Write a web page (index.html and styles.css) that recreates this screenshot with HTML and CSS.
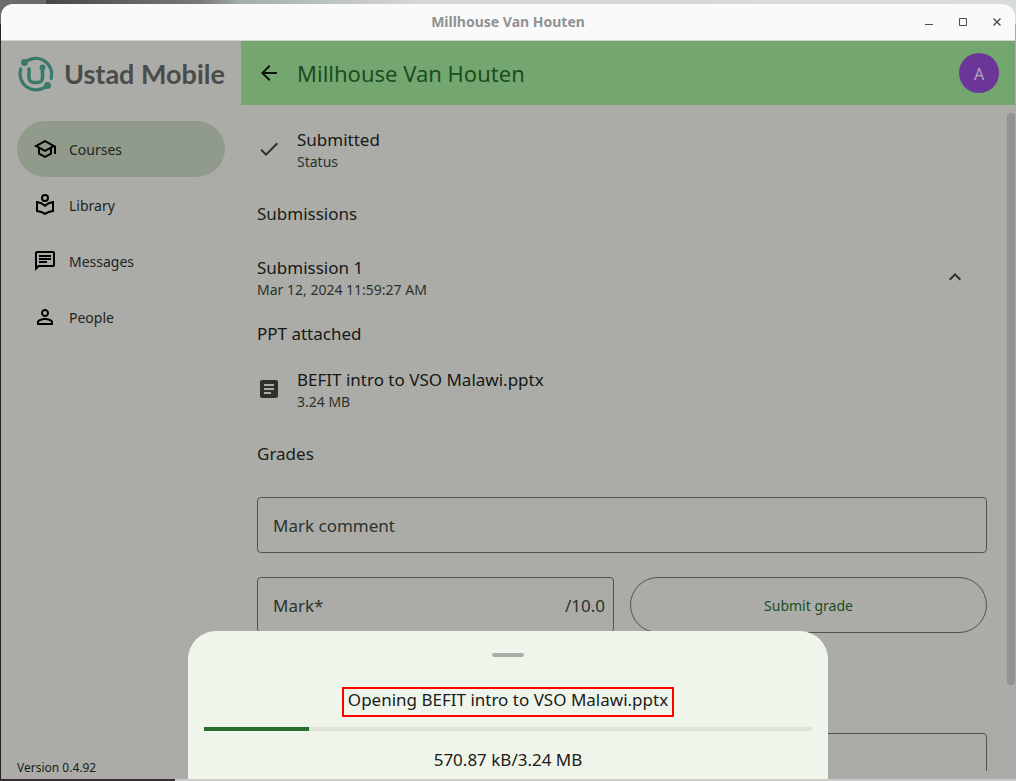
FILE: index.html
```html
<!DOCTYPE html>
<html lang="en">
<head>
<meta charset="utf-8">
<meta name="viewport" content="width=device-width, initial-scale=1">
<title>Millhouse Van Houten</title>
<link rel="stylesheet" href="styles.css">
</head>
<body class="desktop">
<div class="window">
  <header class="titlebar">
    <span class="titlebar-side"></span>
    <span class="titlebar-text">Millhouse Van Houten</span>
    <div class="titlebar-side window-buttons">
      <button class="window-button" aria-label="Minimize"><svg width="10" height="10" viewBox="0 0 10 10"><path d="M1 7.500h8"/></svg></button>
      <button class="window-button" aria-label="Maximize"><svg width="10" height="10" viewBox="0 0 10 10"><path d="M1.500 1.500h7v7h-7z"/></svg></button>
      <button class="window-button" aria-label="Close"><svg width="10" height="10" viewBox="0 0 10 10"><path d="M1.500 1.500l7 7M8.500 1.500l-7 7" stroke-width="1.400"/></svg></button>
    </div>
  </header>

  <div class="app">
    <aside class="sidebar">
      <div class="brand">
        <svg class="brand-mark" width="36" height="36" viewBox="0 0 36 36" aria-hidden="true">
          <g fill="none" stroke="#38796c" stroke-width="3.200" stroke-linecap="round">
            <path d="M7.500 6A16 16 0 0 1 33.200 22.500"/>
            <path d="M2.800 13A16 16 0 0 0 28.500 30"/>
            <path d="M11 13v8.500a5 5 0 0 0 5 5h3.500a5 5 0 0 0 5-5V12" stroke-width="3.600"/>
          </g>
          <g fill="#38796c"><circle cx="6.500" cy="6.500" r="3.400"/><circle cx="29.500" cy="29.500" r="3.400"/><circle cx="24.500" cy="11.500" r="3"/></g>
        </svg>
        <span class="brand-name">Ustad Mobile</span>
      </div>
      <nav class="nav">
        <a class="nav-item nav-item-active" href="#courses"><svg class="icon" viewBox="0 0 24 24"><path d="M12 3L1 9l4 2.180v6L12 21l7-3.820v-6l2-1.090V17h2V9L12 3zm6.820 6L12 12.720 5.180 9 12 5.280 18.820 9zM17 15.990l-5 2.730-5-2.730v-3.720L12 15l5-2.730v3.720z"/></svg><span class="nav-label">Courses</span></a>
        <a class="nav-item" href="#library"><svg class="icon" viewBox="0 0 24 24"><g fill="none" stroke="currentColor" stroke-width="2"><circle cx="12" cy="5" r="3"/><path d="M4 9.100c3 .4 5.800 1.600 8 3.600 2.200-2 5-3.200 8-3.600v8.900c-3 .3-5.800 1.200-8 2.900-2.200-1.700-5-2.600-8-2.900z"/></g></svg><span class="nav-label">Library</span></a>
        <a class="nav-item" href="#messages"><svg class="icon" viewBox="0 0 24 24"><path d="M4 4h16v12H5.170L4 17.170V4m0-2c-1.100 0-1.990.9-1.990 2L2 22l4-4h14c1.100 0 2-.9 2-2V4c0-1.100-.9-2-2-2H4zm2 10h8v2H6v-2zm0-3h12v2H6V9zm0-3h12v2H6V6z"/></svg><span class="nav-label">Messages</span></a>
        <a class="nav-item" href="#people"><svg class="icon" viewBox="0 0 24 24"><path d="M12 5.900a2.100 2.100 0 1 1 0 4.200 2.100 2.100 0 0 1 0-4.200m0 9c2.970 0 6.100 1.460 6.100 2.100v1.100H5.900V17c0-.64 3.130-2.100 6.100-2.100M12 4C9.790 4 8 5.790 8 8s1.790 4 4 4 4-1.790 4-4-1.790-4-4-4zm0 9c-2.670 0-8 1.340-8 4v3h16v-3c0-2.660-5.330-4-8-4z"/></svg><span class="nav-label">People</span></a>
      </nav>
      <p class="version">Version 0.4.92</p>
    </aside>

    <div class="page">
      <div class="appbar">
        <button class="icon-button back" aria-label="Back"><svg class="icon" viewBox="0 0 24 24"><path d="M20 11H7.830l5.590-5.590L12 4l-8 8 8 8 1.410-1.410L7.830 13H20v-2z"/></svg></button>
        <h1 class="appbar-title">Millhouse Van Houten</h1>
        <button class="avatar">A</button>
      </div>

      <main class="content">
        <div class="content-body">
          <div class="row">
            <svg class="icon" viewBox="0 0 24 24"><path d="M9 16.170L4.830 12l-1.420 1.410L9 19 21 7l-1.410-1.410z"/></svg>
            <div class="row-text"><div class="primary">Submitted</div><div class="secondary">Status</div></div>
          </div>
          <h2 class="section">Submissions</h2>
          <div class="row row-expand">
            <div class="row-text"><div class="primary">Submission 1</div><div class="secondary">Mar 12, 2024 11:59:27 AM</div></div>
            <button class="icon-button expand" aria-label="Collapse"><svg class="icon" viewBox="0 0 24 24"><path d="M12 8l-6 6 1.410 1.410L12 10.830l4.590 4.580L18 14z"/></svg></button>
          </div>
          <p class="primary note">PPT attached</p>
          <div class="row">
            <svg class="icon" viewBox="0 0 24 24"><path d="M19 3H5c-1.100 0-2 .9-2 2v14c0 1.100.9 2 2 2h14c1.100 0 2-.9 2-2V5c0-1.100-.9-2-2-2zm-5 14H7v-2h7v2zm3-4H7v-2h10v2zm0-4H7V7h10v2z"/></svg>
            <div class="row-text"><div class="primary">BEFIT intro to VSO Malawi.pptx</div><div class="secondary">3.24 MB</div></div>
          </div>
          <h2 class="section">Grades</h2>
          <form class="grade-form">
            <div class="field"><input class="field-input" type="text" aria-label="Mark comment" placeholder="Mark comment"></div>
            <div class="grade-row">
              <div class="field"><input class="field-input" type="text" aria-label="Mark" placeholder="Mark*"><span class="field-suffix">/10.0</span></div>
              <button class="submit" type="button">Submit grade</button>
            </div>
          </form>
          <div class="field comment-field"><input class="field-input" type="text" aria-label="Comment"></div>
        </div>
        <div class="scrollbar"></div>
      </main>
    </div>
  </div>

  <section class="sheet" aria-label="Opening file">
    <div class="sheet-handle"></div>
    <label class="sheet-title" for="download">Opening BEFIT intro to VSO Malawi.pptx</label>
    <progress class="sheet-progress" id="download" value="570.87" max="3320"></progress>
    <p class="sheet-size">570.87 kB/3.24 MB</p>
  </section>
</div>
</body>
</html>
```

FILE: styles.css
```css
* {
  box-sizing: border-box;
}

body, h1, h2, p {
  margin: 0;
}

button, input {
  font: inherit;
  color: inherit;
  background: none;
  border: 0;
  padding: 0;
}

.desktop {
  height: 100vh;
  display: flex;
  flex-direction: column;
  padding: 4px 1px 2px;
  overflow: hidden;
  background:
    linear-gradient(90deg, #6c6b6b 46px, #46484c 46px, #77797b 200px, #a5acac 240px, #d5d8d8 420px, #d9dcdc) top / 100% 24px no-repeat,
    linear-gradient(90deg, #352f31 175px, #cbcacb 175px) bottom / 100% 2px no-repeat,
    linear-gradient(90deg, #2b1f25 50%, #a9aaa9 50%);
  font-family: "Noto Sans", sans-serif;
  color: #1a1c19;
}

.window {
  position: relative;
  flex: 1;
  min-height: 0;
  display: flex;
  flex-direction: column;
  overflow: hidden;
  border-radius: 12px 12px 0 0;
  background: #abaca7;
}

.titlebar {
  display: flex;
  align-items: center;
  height: 37px;
  flex: none;
  background: #fafafa;
  border-bottom: 1px solid #d2d2d2;
}

.titlebar-side {
  flex: 1;
  padding: 0 6px;
}

.titlebar-text {
  font-size: 14px;
  font-weight: 700;
  line-height: 20px;
  color: #929292;
}

.window-buttons {
  display: flex;
  justify-content: flex-end;
  gap: 10px;
}

.window-button {
  width: 24px;
  height: 24px;
  display: grid;
  place-items: center;
}

.window-button svg {
  fill: none;
  stroke: #4b4b4b;
}

.app {
  flex: 1;
  min-height: 0;
  display: flex;
}

.sidebar {
  width: 240px;
  flex: none;
  display: flex;
  flex-direction: column;
}

.brand {
  height: 64px;
  display: flex;
  align-items: center;
  gap: 10px;
  padding: 2px 16px 0 17px;
}

.brand-mark {
  flex: none;
  overflow: visible;
}

.brand-name {
  font-family: Lato, sans-serif;
  font-size: 27px;
  font-weight: 700;
  line-height: 32px;
  color: #4a4b4b;
  white-space: nowrap;
}

.nav {
  padding: 16px;
}

.nav-item {
  display: flex;
  align-items: center;
  gap: 12px;
  height: 56px;
  padding: 0 16px;
  border-radius: 28px;
  font-size: 14px;
  line-height: 20px;
  color: #20241f;
  text-decoration: none;
}

.nav-label {
  padding-top: 2px;
}

.nav-item .icon {
  color: #000;
}

.nav-item-active {
  background: #909b8b;
}

.icon {
  width: 24px;
  height: 24px;
  flex: none;
  fill: currentColor;
}

.version {
  margin-top: auto;
  padding: 0 16px 3px;
  font-size: 12px;
  line-height: 16px;
}

.page {
  flex: 1;
  min-width: 0;
  display: flex;
  flex-direction: column;
}

.appbar {
  height: 64px;
  flex: none;
  display: flex;
  align-items: center;
  padding: 0 16px 0 4px;
  background: #74a76f;
}

.icon-button {
  width: 48px;
  height: 48px;
  display: grid;
  place-items: center;
}

.back {
  color: #0b120b;
}

.appbar-title {
  flex: 1;
  padding-left: 4px;
  font-size: 22px;
  font-weight: 400;
  line-height: 28px;
  color: #1b4d1e;
}

.avatar {
  width: 40px;
  height: 40px;
  padding-top: 2px;
  border-radius: 50%;
  background: #6c3699;
  color: #b3a6bb;
  font-size: 16px;
  line-height: 24px;
}

.content {
  flex: 1;
  min-height: 0;
  display: flex;
  gap: 20px;
  padding: 8px 0 8px 16px;
}

.content-body {
  flex: 1;
  min-width: 0;
  overflow: hidden;
}

.scrollbar {
  width: 8px;
  height: 87%;
  border-radius: 4px;
  background: #93948f;
}

.row {
  display: flex;
  align-items: center;
  gap: 16px;
  height: 72px;
  color: #2c322b;
}

.row-text {
  flex: 1;
  padding-top: 2px;
}

.row-expand {
  padding-right: 8px;
}

.primary {
  font-size: 17px;
  line-height: 24px;
  color: #151815;
}

.secondary {
  font-size: 14px;
  line-height: 20px;
}

.section {
  padding: 17px 0 15px;
  font-size: 17px;
  font-weight: 400;
  line-height: 24px;
}

.note {
  padding: 9px 0 7px;
}

.grade-form {
  display: flex;
  flex-direction: column;
  gap: 24px;
  padding: 16px 0 100px;
}

.grade-row {
  display: grid;
  grid-template-columns: 1fr 1fr;
  gap: 16px;
}

.field {
  display: flex;
  align-items: center;
  height: 56px;
  padding: 2px 8px 0 15px;
  border: 1px solid #50534e;
  border-radius: 4px;
  font-size: 17px;
  line-height: 24px;
  color: #2c322b;
}

.field-input {
  flex: 1;
  min-width: 0;
  height: 24px;
  outline: 0;
}

.field-input::placeholder {
  color: inherit;
  opacity: 1;
}

.submit {
  height: 56px;
  padding-top: 2px;
  border: 1px solid #50534e;
  border-radius: 28px;
  font-size: 14px;
  line-height: 20px;
  color: #1b4d1e;
}

.sheet {
  position: absolute;
  left: 0;
  right: 0;
  bottom: 0;
  max-width: 640px;
  margin: 0 auto;
  padding: 22px 16px 7px;
  display: flex;
  flex-direction: column;
  align-items: center;
  border-radius: 28px 28px 0 0;
  background: #eff5eb;
}

.sheet-handle {
  width: 32px;
  height: 4px;
  border-radius: 2px;
  background: #a8aea6;
}

.sheet-title {
  margin: 30px 0 10px;
  padding: 0 4px 4px;
  border: 2px solid #f00;
  font-size: 17px;
  line-height: 22px;
}

.sheet-progress {
  display: block;
  width: 100%;
  height: 4px;
  border: 0;
  appearance: none;
  background: #dee4da;
}

.sheet-progress::-webkit-progress-bar {
  background: #dee4da;
}

.sheet-progress::-webkit-progress-value {
  background: #2a6e2c;
}

.sheet-size {
  margin-top: 17px;
  font-size: 17px;
  line-height: 24px;
}
```
